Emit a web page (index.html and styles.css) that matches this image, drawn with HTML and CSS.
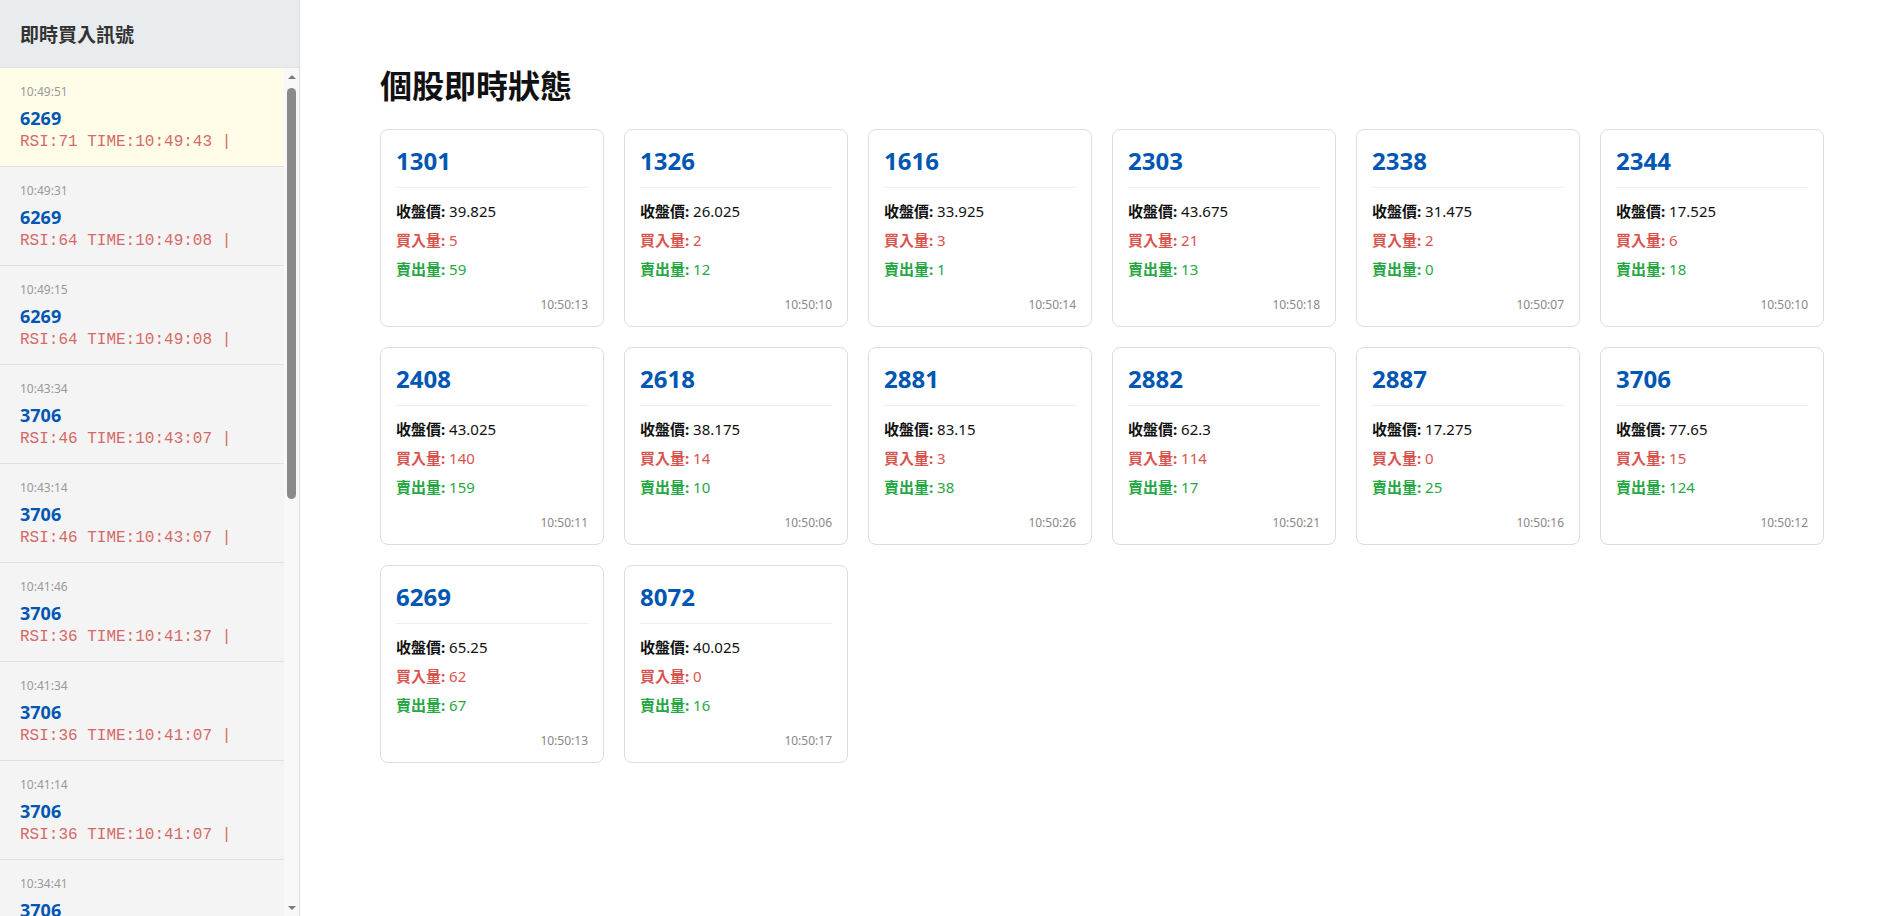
FILE: index.html
```html
<!DOCTYPE html>
<html lang="zh-Hant">
<head>
<meta charset="utf-8">
<title>即時監控</title>
<link rel="stylesheet" href="styles.css">
</head>
<body>
<div class="app">
  <aside class="sidebar">
    <div class="sidebar-header">即時買入訊號</div>
    <div class="signal-pane">
      <div class="signal-list">
        <div class="signal signal-new"><div class="signal-time">10:49:51</div><div class="signal-code">6269</div><div class="signal-msg">RSI:71 TIME:10:49:43 |</div></div>
        <div class="signal"><div class="signal-time">10:49:31</div><div class="signal-code">6269</div><div class="signal-msg">RSI:64 TIME:10:49:08 |</div></div>
        <div class="signal"><div class="signal-time">10:49:15</div><div class="signal-code">6269</div><div class="signal-msg">RSI:64 TIME:10:49:08 |</div></div>
        <div class="signal"><div class="signal-time">10:43:34</div><div class="signal-code">3706</div><div class="signal-msg">RSI:46 TIME:10:43:07 |</div></div>
        <div class="signal"><div class="signal-time">10:43:14</div><div class="signal-code">3706</div><div class="signal-msg">RSI:46 TIME:10:43:07 |</div></div>
        <div class="signal"><div class="signal-time">10:41:46</div><div class="signal-code">3706</div><div class="signal-msg">RSI:36 TIME:10:41:37 |</div></div>
        <div class="signal"><div class="signal-time">10:41:34</div><div class="signal-code">3706</div><div class="signal-msg">RSI:36 TIME:10:41:07 |</div></div>
        <div class="signal"><div class="signal-time">10:41:14</div><div class="signal-code">3706</div><div class="signal-msg">RSI:36 TIME:10:41:07 |</div></div>
        <div class="signal"><div class="signal-time">10:34:41</div><div class="signal-code">3706</div><div class="signal-msg">RSI:33 TIME:10:34:07 |</div></div>
      </div>
      <div class="scrollbar">
        <div class="sb-btn"><span class="sb-arrow-up"></span></div>
        <div class="sb-track"><div class="sb-thumb"></div></div>
        <div class="sb-btn"><span class="sb-arrow-down"></span></div>
      </div>
    </div>
  </aside>
  <main class="main">
    <h1 class="page-title">個股即時狀態</h1>
    <div class="card-grid">
      <div class="card"><h3 class="card-code">1301</h3><p class="row"><b>收盤價:</b> 39.825</p><p class="row buy"><b>買入量:</b> 5</p><p class="row sell"><b>賣出量:</b> 59</p><div class="card-time">10:50:13</div></div>
      <div class="card"><h3 class="card-code">1326</h3><p class="row"><b>收盤價:</b> 26.025</p><p class="row buy"><b>買入量:</b> 2</p><p class="row sell"><b>賣出量:</b> 12</p><div class="card-time">10:50:10</div></div>
      <div class="card"><h3 class="card-code">1616</h3><p class="row"><b>收盤價:</b> 33.925</p><p class="row buy"><b>買入量:</b> 3</p><p class="row sell"><b>賣出量:</b> 1</p><div class="card-time">10:50:14</div></div>
      <div class="card"><h3 class="card-code">2303</h3><p class="row"><b>收盤價:</b> 43.675</p><p class="row buy"><b>買入量:</b> 21</p><p class="row sell"><b>賣出量:</b> 13</p><div class="card-time">10:50:18</div></div>
      <div class="card"><h3 class="card-code">2338</h3><p class="row"><b>收盤價:</b> 31.475</p><p class="row buy"><b>買入量:</b> 2</p><p class="row sell"><b>賣出量:</b> 0</p><div class="card-time">10:50:07</div></div>
      <div class="card"><h3 class="card-code">2344</h3><p class="row"><b>收盤價:</b> 17.525</p><p class="row buy"><b>買入量:</b> 6</p><p class="row sell"><b>賣出量:</b> 18</p><div class="card-time">10:50:10</div></div>
      <div class="card"><h3 class="card-code">2408</h3><p class="row"><b>收盤價:</b> 43.025</p><p class="row buy"><b>買入量:</b> 140</p><p class="row sell"><b>賣出量:</b> 159</p><div class="card-time">10:50:11</div></div>
      <div class="card"><h3 class="card-code">2618</h3><p class="row"><b>收盤價:</b> 38.175</p><p class="row buy"><b>買入量:</b> 14</p><p class="row sell"><b>賣出量:</b> 10</p><div class="card-time">10:50:06</div></div>
      <div class="card"><h3 class="card-code">2881</h3><p class="row"><b>收盤價:</b> 83.15</p><p class="row buy"><b>買入量:</b> 3</p><p class="row sell"><b>賣出量:</b> 38</p><div class="card-time">10:50:26</div></div>
      <div class="card"><h3 class="card-code">2882</h3><p class="row"><b>收盤價:</b> 62.3</p><p class="row buy"><b>買入量:</b> 114</p><p class="row sell"><b>賣出量:</b> 17</p><div class="card-time">10:50:21</div></div>
      <div class="card"><h3 class="card-code">2887</h3><p class="row"><b>收盤價:</b> 17.275</p><p class="row buy"><b>買入量:</b> 0</p><p class="row sell"><b>賣出量:</b> 25</p><div class="card-time">10:50:16</div></div>
      <div class="card"><h3 class="card-code">3706</h3><p class="row"><b>收盤價:</b> 77.65</p><p class="row buy"><b>買入量:</b> 15</p><p class="row sell"><b>賣出量:</b> 124</p><div class="card-time">10:50:12</div></div>
      <div class="card"><h3 class="card-code">6269</h3><p class="row"><b>收盤價:</b> 65.25</p><p class="row buy"><b>買入量:</b> 62</p><p class="row sell"><b>賣出量:</b> 67</p><div class="card-time">10:50:13</div></div>
      <div class="card"><h3 class="card-code">8072</h3><p class="row"><b>收盤價:</b> 40.025</p><p class="row buy"><b>買入量:</b> 0</p><p class="row sell"><b>賣出量:</b> 16</p><div class="card-time">10:50:17</div></div>
    </div>
  </main>
</div>
</body>
</html>
```

FILE: styles.css
```css
html, body {
  margin: 0;
  padding: 0;
  height: 100%;
  overflow: hidden;
  background: #ffffff;
  font-family: "Noto Sans", "Noto Sans CJK TC", sans-serif;
  color: #111;
}

.app {
  display: flex;
  height: 100vh;
}

.sidebar {
  width: 300px;
  flex: 0 0 300px;
  box-sizing: border-box;
  border-right: 1px solid #dcdcdc;
  display: flex;
  flex-direction: column;
  background: #f8f8f8;
  min-height: 0;
}

.sidebar-header {
  height: 68px;
  flex: 0 0 68px;
  box-sizing: border-box;
  padding: 0 20px;
  display: flex;
  align-items: center;
  background: #e9ecef;
  border-bottom: 1px solid #dee2e6;
  font-size: 19px;
  font-weight: 700;
  color: #333;
}

.signal-pane {
  flex: 1;
  min-height: 0;
  display: flex;
}

.signal-list {
  flex: 1;
  min-width: 0;
  overflow: hidden;
}

.scrollbar {
  width: 15px;
  flex: 0 0 15px;
  display: flex;
  flex-direction: column;
  background: #f8f8f8;
}

.sb-btn {
  height: 17px;
  flex: 0 0 17px;
  display: flex;
  align-items: center;
  justify-content: center;
}

.sb-arrow-up {
  width: 0;
  height: 0;
  border-left: 4px solid transparent;
  border-right: 4px solid transparent;
  border-bottom: 4px solid #7a7a7a;
}

.sb-arrow-down {
  width: 0;
  height: 0;
  border-left: 4px solid transparent;
  border-right: 4px solid transparent;
  border-top: 4px solid #7a7a7a;
}

.sb-track {
  flex: 1;
  padding: 3px 3px 0;
}

.sb-thumb {
  height: 411px;
  background: #8a8a8a;
  border-radius: 5px;
}

.signal {
  padding: 16px 20px 14px;
  background: #f4f4f4;
  border-bottom: 1px solid #e0e0e0;
}

.signal-new {
  background: #fffde8;
}

.signal-time {
  font-size: 12px;
  line-height: 16px;
  color: #999;
}

.signal-code {
  margin-top: 6px;
  font-size: 18px;
  line-height: 24px;
  font-weight: 700;
  color: #0056b3;
}

.signal-msg {
  margin-top: 2px;
  font-family: "Liberation Mono", "Courier New", monospace;
  font-size: 16px;
  line-height: 20px;
  color: #d46a67;
  white-space: nowrap;
}

.main {
  flex: 1;
  padding: 40px 80px;
  overflow: hidden;
}

.page-title {
  margin: 23px 0 20px;
  font-size: 32px;
  line-height: 46px;
  font-weight: 700;
  color: #111;
}

.card-grid {
  display: grid;
  grid-template-columns: repeat(auto-fill, minmax(200px, 1fr));
  gap: 20px;
}

.card {
  border: 1px solid #dcdcdc;
  border-radius: 8px;
  padding: 16px 15px 13px;
  background: #fff;
}

.card-code {
  margin: 0 0 13px;
  padding-bottom: 11px;
  border-bottom: 1px solid #eeeeee;
  font-size: 24px;
  line-height: 30px;
  font-weight: 700;
  color: #0056b3;
}

.row {
  margin: 0 0 8px;
  font-size: 15px;
  line-height: 21px;
  color: #111;
}
.row:last-of-type {
  margin-bottom: 0;
}
.row b {
  font-weight: 700;
}

.buy {
  color: #d9534f;
}
.sell {
  color: #28a745;
}

.card-time {
  margin-top: 17px;
  font-size: 12px;
  line-height: 16px;
  color: #888;
  text-align: right;
}
```
